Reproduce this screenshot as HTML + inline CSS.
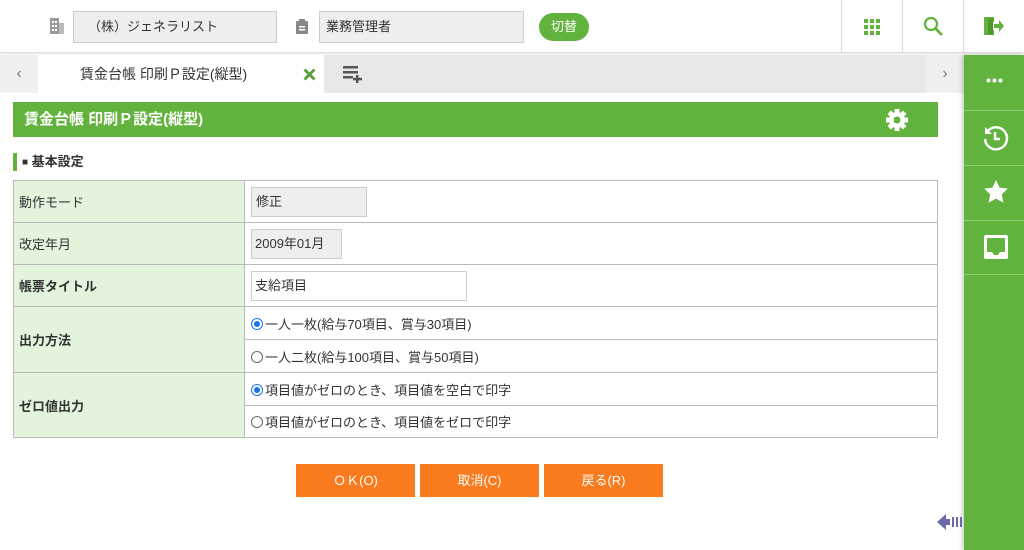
<!DOCTYPE html>
<html><head><meta charset="utf-8"><style>
*{box-sizing:border-box;margin:0;padding:0}
body{width:1024px;height:550px;overflow:hidden;background:#fff;font-family:"Liberation Sans","Noto Sans CJK JP",sans-serif;font-size:13px;color:#333;position:relative}
.a{position:absolute}
.inp{position:absolute;background:#eee;border:1px solid #ccc;font-size:13px;padding-left:8px;line-height:30px}
.green{background:#62b33e}
table{position:absolute;left:13px;top:180px;width:925px;border-collapse:collapse}
td{border:1px solid #bbb;font-size:13px}
td.l{background:#e2f4dc;width:231px;padding-left:5px}
.rad{display:inline-block;width:12px;height:12px;border:1px solid #666;border-radius:50%;vertical-align:-1px;margin:0 2px 0 6px;position:relative}
.rad.on{border-color:#1a73e8}
.rad.on:after{content:"";position:absolute;left:2px;top:2px;width:6px;height:6px;border-radius:50%;background:#1a73e8}
.btn{position:absolute;top:464px;width:119px;height:33px;background:#fa7a1e;color:#fff;text-align:center;line-height:33px;font-size:13px}
</style></head><body>
<div class="a" style="left:0;top:0;width:1024px;height:53px;border-bottom:1px solid #ddd;box-shadow:0 1px 3px rgba(0,0,0,.12)"></div>
<svg class="a" style="left:50px;top:18px" width="14" height="16"><rect x="0" y="0" width="9" height="16" fill="#999"/><rect x="9" y="5" width="5" height="11" fill="#bbb"/><g fill="#fff"><rect x="2" y="3" width="2" height="2"/><rect x="5" y="3" width="2" height="2"/><rect x="2" y="7" width="2" height="2"/><rect x="5" y="7" width="2" height="2"/><rect x="2" y="11" width="2" height="2"/><rect x="5" y="11" width="2" height="2"/></g></svg>
<div class="inp" style="left:73px;top:11px;width:204px;height:32px;padding-left:14px">（株）ジェネラリスト</div>
<svg class="a" style="left:296px;top:19px" width="12" height="15"><rect x="0" y="2" width="12" height="13" rx="1" fill="#888"/><rect x="3" y="0" width="6" height="4" fill="#888"/><rect x="3" y="7" width="6" height="1.5" fill="#fff"/><rect x="3" y="10" width="6" height="1.5" fill="#fff"/></svg>
<div class="inp" style="left:319px;top:11px;width:205px;height:32px;padding-left:6px">業務管理者</div>
<div class="a green" style="left:539px;top:13px;width:50px;height:28px;border-radius:14px;color:#fff;text-align:center;line-height:28px">切替</div>
<div class="a" style="left:841px;top:0;width:1px;height:53px;background:#ddd"></div>
<div class="a" style="left:902px;top:0;width:1px;height:53px;background:#ddd"></div>
<div class="a" style="left:963px;top:0;width:1px;height:53px;background:#ddd"></div>
<svg class="a" style="left:864px;top:19px" width="16" height="16" fill="#62b33e"><rect x="0" y="0" width="4" height="4"/><rect x="6" y="0" width="4" height="4"/><rect x="12" y="0" width="4" height="4"/><rect x="0" y="6" width="4" height="4"/><rect x="6" y="6" width="4" height="4"/><rect x="12" y="6" width="4" height="4"/><rect x="0" y="12" width="4" height="4"/><rect x="6" y="12" width="4" height="4"/><rect x="12" y="12" width="4" height="4"/></svg>
<svg class="a" style="left:923px;top:16px" width="20" height="20"><circle cx="8" cy="8" r="6" fill="none" stroke="#62b33e" stroke-width="2.2"/><path d="M12.5 12.5L18 18" stroke="#62b33e" stroke-width="2.8" stroke-linecap="round"/></svg>
<svg class="a" style="left:983px;top:16px" width="22" height="20" fill="#62b33e"><path d="M1 1h10v5h-3v8h3v5h-10z"/><path d="M10 2l-5 1v15l5 1z" fill="#4a9a2a"/><path d="M11 8h5v-4l5 6-5 6v-4h-5z"/></svg>
<div class="a" style="left:0;top:55px;width:964px;height:38px;background:#e8e8e8"></div>
<div class="a" style="left:0;top:55px;width:38px;height:38px;background:#efefef;color:#777;line-height:38px;text-align:center;font-size:16px">‹</div>
<div class="a" style="left:926px;top:55px;width:38px;height:38px;background:#efefef;color:#777;line-height:38px;text-align:center;font-size:16px">›</div>
<div class="a" style="left:38px;top:55px;width:286px;height:38px;background:#fff;line-height:38px;padding-left:42px;font-size:14px">賃金台帳 印刷Ｐ設定(縦型)</div>
<svg class="a" style="left:303px;top:68px" width="13" height="13"><path d="M1.5 1.5L11.5 11.5M11.5 1.5L1.5 11.5" stroke="#5a9e3a" stroke-width="2.8"/></svg>
<svg class="a" style="left:343px;top:66px" width="24" height="17" fill="#555"><rect x="0" y="0" width="15" height="2.5"/><rect x="0" y="5" width="15" height="2.5"/><rect x="0" y="10" width="10" height="2.5"/><rect x="13" y="9" width="2.5" height="8"/><rect x="10" y="11.8" width="9" height="2.5"/></svg>
<div class="a green" style="left:964px;top:55px;width:60px;height:495px;box-shadow:-2px 0 4px rgba(0,0,0,.2)"></div>
<div class="a" style="left:964px;top:110px;width:60px;height:1px;background:#8ccb70"></div>
<div class="a" style="left:964px;top:165px;width:60px;height:1px;background:#8ccb70"></div>
<div class="a" style="left:964px;top:220px;width:60px;height:1px;background:#8ccb70"></div>
<div class="a" style="left:964px;top:274px;width:60px;height:1px;background:#8ccb70"></div>
<svg class="a" style="left:986px;top:78px" width="17" height="5" fill="#fff"><circle cx="2.5" cy="2.5" r="2"/><circle cx="8.5" cy="2.5" r="2"/><circle cx="14.5" cy="2.5" r="2"/></svg>
<svg class="a" style="left:981px;top:124px" width="28" height="28" fill="none" stroke="#fff" stroke-width="2.4"><path d="M6 8A11 11 0 1 1 4 15"/><path d="M3 3v7h7" fill="#fff" stroke="none" transform="translate(1,0)"/><path d="M14 8v7h5"/></svg>
<svg class="a" style="left:983px;top:179px" width="26" height="25"><path d="M13 1l3.6 7.6 8.2 1-6 5.8 1.5 8.2-7.3-4-7.3 4 1.5-8.2-6-5.8 8.2-1z" fill="#fff"/></svg>
<svg class="a" style="left:983px;top:234px" width="26" height="26"><rect x="1" y="1" width="24" height="24" rx="2" fill="#fff"/><path d="M4 4h18v14h-5l-2 3h-4l-2-3h-5z" fill="#62b33e"/></svg>
<div class="a green" style="left:13px;top:102px;width:925px;height:35px;color:#fff;font-weight:bold;font-size:15px;line-height:35px;padding-left:11px">賃金台帳 印刷Ｐ設定(縦型)</div>
<svg class="a" style="left:885px;top:108px" width="24" height="24" viewBox="0 0 24 24"><g fill="#fff"><circle cx="12" cy="12" r="8"/><g id="t"><rect x="9.5" y="1" width="5" height="22"/></g><rect x="9.5" y="1" width="5" height="22" transform="rotate(45 12 12)"/><rect x="9.5" y="1" width="5" height="22" transform="rotate(90 12 12)"/><rect x="9.5" y="1" width="5" height="22" transform="rotate(135 12 12)"/></g><circle cx="12" cy="12" r="3.5" fill="#62b33e"/></svg>
<div class="a" style="left:13px;top:153px;width:4px;height:18px;background:#62b33e"></div>
<div class="a" style="left:22px;top:153px;font-weight:bold;font-size:13px;line-height:18px"><span style="font-size:10px;vertical-align:1px">■</span> 基本設定</div>
<table>
<tr style="height:42px"><td class="l">動作モード</td><td style="padding-left:6px"><div style="width:116px;height:30px;background:#eee;border:1px solid #ccc;line-height:28px;padding-left:4px">修正</div></td></tr>
<tr style="height:42px"><td class="l">改定年月</td><td style="padding-left:6px"><div style="width:91px;height:30px;background:#eee;border:1px solid #ccc;line-height:28px;padding-left:3px">2009年01月</div></td></tr>
<tr style="height:42px"><td class="l" style="font-weight:bold">帳票タイトル</td><td style="padding-left:6px"><div style="width:216px;height:30px;border:1px solid #ccc;line-height:28px;padding-left:3px">支給項目</div></td></tr>
<tr style="height:33px"><td class="l" rowspan="2" style="font-weight:bold">出力方法</td><td><span class="rad on"></span>一人一枚(給与70項目、賞与30項目)</td></tr>
<tr style="height:33px"><td><span class="rad"></span>一人二枚(給与100項目、賞与50項目)</td></tr>
<tr style="height:33px"><td class="l" rowspan="2" style="font-weight:bold">ゼロ値出力</td><td><span class="rad on"></span>項目値がゼロのとき、項目値を空白で印字</td></tr>
<tr style="height:32px"><td><span class="rad"></span>項目値がゼロのとき、項目値をゼロで印字</td></tr>
</table>
<div class="btn" style="left:296px">ＯＫ(O)</div>
<div class="btn" style="left:420px">取消(C)</div>
<div class="btn" style="left:544px">戻る(R)</div>
<svg class="a" style="left:937px;top:512px" width="26" height="20"><path d="M0 10l9-8v5h4v6h-4v5z" fill="#6a6aa8"/><rect x="15" y="5" width="2" height="10" fill="#6a6aa8"/><rect x="19" y="5" width="2" height="10" fill="#6a6aa8"/><rect x="23" y="5" width="2" height="10" fill="#6a6aa8"/></svg>
</body></html>
